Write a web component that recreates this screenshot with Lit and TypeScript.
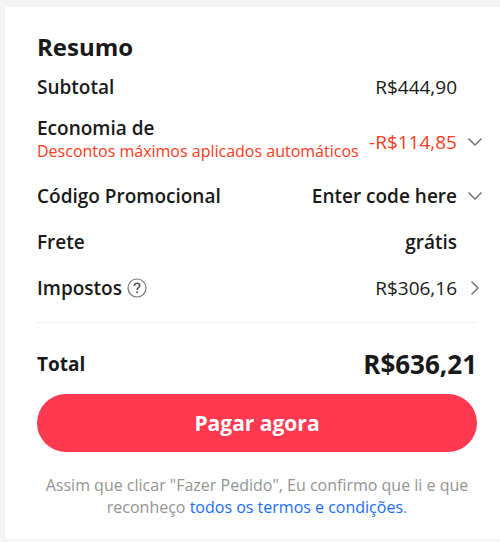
import { LitElement, html, css } from "lit";
import { customElement } from "lit/decorators.js";

const chevronDown = html`<svg class="chevron" viewBox="0 0 16 16" aria-hidden="true">
  <path d="M1.500 4.500 8 11l6.500-6.500" />
</svg>`;

const chevronRight = html`<svg class="chevron" viewBox="0 0 16 16" aria-hidden="true">
  <path d="M4.500 1.500 11 8l-6.500 6.500" />
</svg>`;

@customElement("app-root")
export class AppRoot extends LitElement {
  static styles = css`
    :host {
      display: block;
      box-sizing: border-box;
      min-height: 100vh;
      padding: 7px 0 3px 5px;
      background: #f4f4f4;
      color: #191919;
      font-family: "Open Sans", "Noto Sans", sans-serif;
      font-size: 19px;
      line-height: 24px;
      font-weight: 600;
    }
    .card {
      background: #fff;
      padding: 24px 23px 21px 32px;
    }
    h2 {
      margin: 0;
      font-size: 24px;
      line-height: 32px;
      font-weight: 700;
    }
    .rows {
      display: flex;
      flex-direction: column;
      gap: 22px;
      padding: 12px 0 22px;
      border-bottom: 1px solid #efefef;
    }
    .row {
      display: flex;
      align-items: center;
      justify-content: space-between;
    }
    .savings {
      margin: -5px 0 0;
    }
    .label {
      display: flex;
      align-items: center;
      gap: 5px;
    }
    .stack {
      display: block;
    }
    .note {
      display: block;
      color: #fd3a20;
      font-size: 16px;
      line-height: 22px;
      font-weight: 400;
    }
    .value {
      padding-right: 20px;
    }
    .amount {
      font-weight: 400;
    }
    button {
      margin: 0;
      border: 0;
      padding: 0;
      background: none;
      color: inherit;
      font: inherit;
      cursor: pointer;
    }
    .toggle {
      display: flex;
      align-items: center;
      gap: 10px;
      margin-right: -6px;
    }
    .discount {
      padding-top: 6px;
      color: #fd3a20;
    }
    .toggle.amount,
    .toggle.discount {
      font-weight: 400;
    }
    .chevron {
      width: 16px;
      height: 16px;
      fill: none;
      stroke: #6b6b6b;
      stroke-width: 1.4;
    }
    .help {
      display: flex;
    }
    .help-icon {
      width: 20px;
      height: 20px;
      fill: none;
      stroke: #757575;
      stroke-width: 1.2;
    }
    .help-icon .mark {
      stroke: #555;
      stroke-width: 1.6;
    }
    .help-icon .dot {
      fill: #555;
      stroke: none;
    }
    .total {
      padding: 25px 0 14px;
      font-weight: 700;
      line-height: 32px;
    }
    .total-amount {
      font-size: 26px;
    }
    .pay {
      display: block;
      width: 100%;
      height: 58px;
      border-radius: 29px;
      background: #ff394f;
      color: #fff;
      font-size: 21px;
      font-weight: 700;
    }
    .legal {
      margin: 22px 0 0;
      color: #949494;
      font-size: 16px;
      line-height: 22px;
      font-weight: 400;
      text-align: center;
    }
    a {
      color: #1a6dff;
      text-decoration: none;
    }
  `;

  render() {
    return html`
      <section class="card">
        <h2>Resumo</h2>
        <div class="rows">
          <div class="row">
            <span>Subtotal</span>
            <span class="value amount">R$444,90</span>
          </div>
          <div class="row savings">
            <span class="stack">Economia de
              <span class="note">Descontos máximos aplicados automáticos</span>
            </span>
            <button class="toggle discount">-R$114,85 ${chevronDown}</button>
          </div>
          <div class="row">
            <span>Código Promocional</span>
            <button class="toggle">Enter code here ${chevronDown}</button>
          </div>
          <div class="row">
            <span>Frete</span>
            <span class="value">grátis</span>
          </div>
          <div class="row">
            <span class="label">Impostos
              <button class="help" aria-label="Sobre os impostos">
                <svg class="help-icon" viewBox="0 0 20 20" aria-hidden="true">
                  <circle cx="10" cy="10" r="9" />
                  <path class="mark" d="M7.300 8C7.300 6.300 8.500 5.300 10 5.300S12.700 6.300 12.700 7.800C12.700 9.600 10 9.800 10 12" />
                  <circle class="dot" cx="10" cy="14.200" r="1" />
                </svg>
              </button>
            </span>
            <button class="toggle amount">R$306,16 ${chevronRight}</button>
          </div>
        </div>
        <div class="row total">
          <span>Total</span>
          <span class="total-amount">R$636,21</span>
        </div>
        <button class="pay">Pagar agora</button>
        <p class="legal">
          Assim que clicar "Fazer Pedido", Eu confirmo que li e que reconheço
          <a href="#termos">todos os termos e condições</a>.
        </p>
      </section>
    `;
  }
}
